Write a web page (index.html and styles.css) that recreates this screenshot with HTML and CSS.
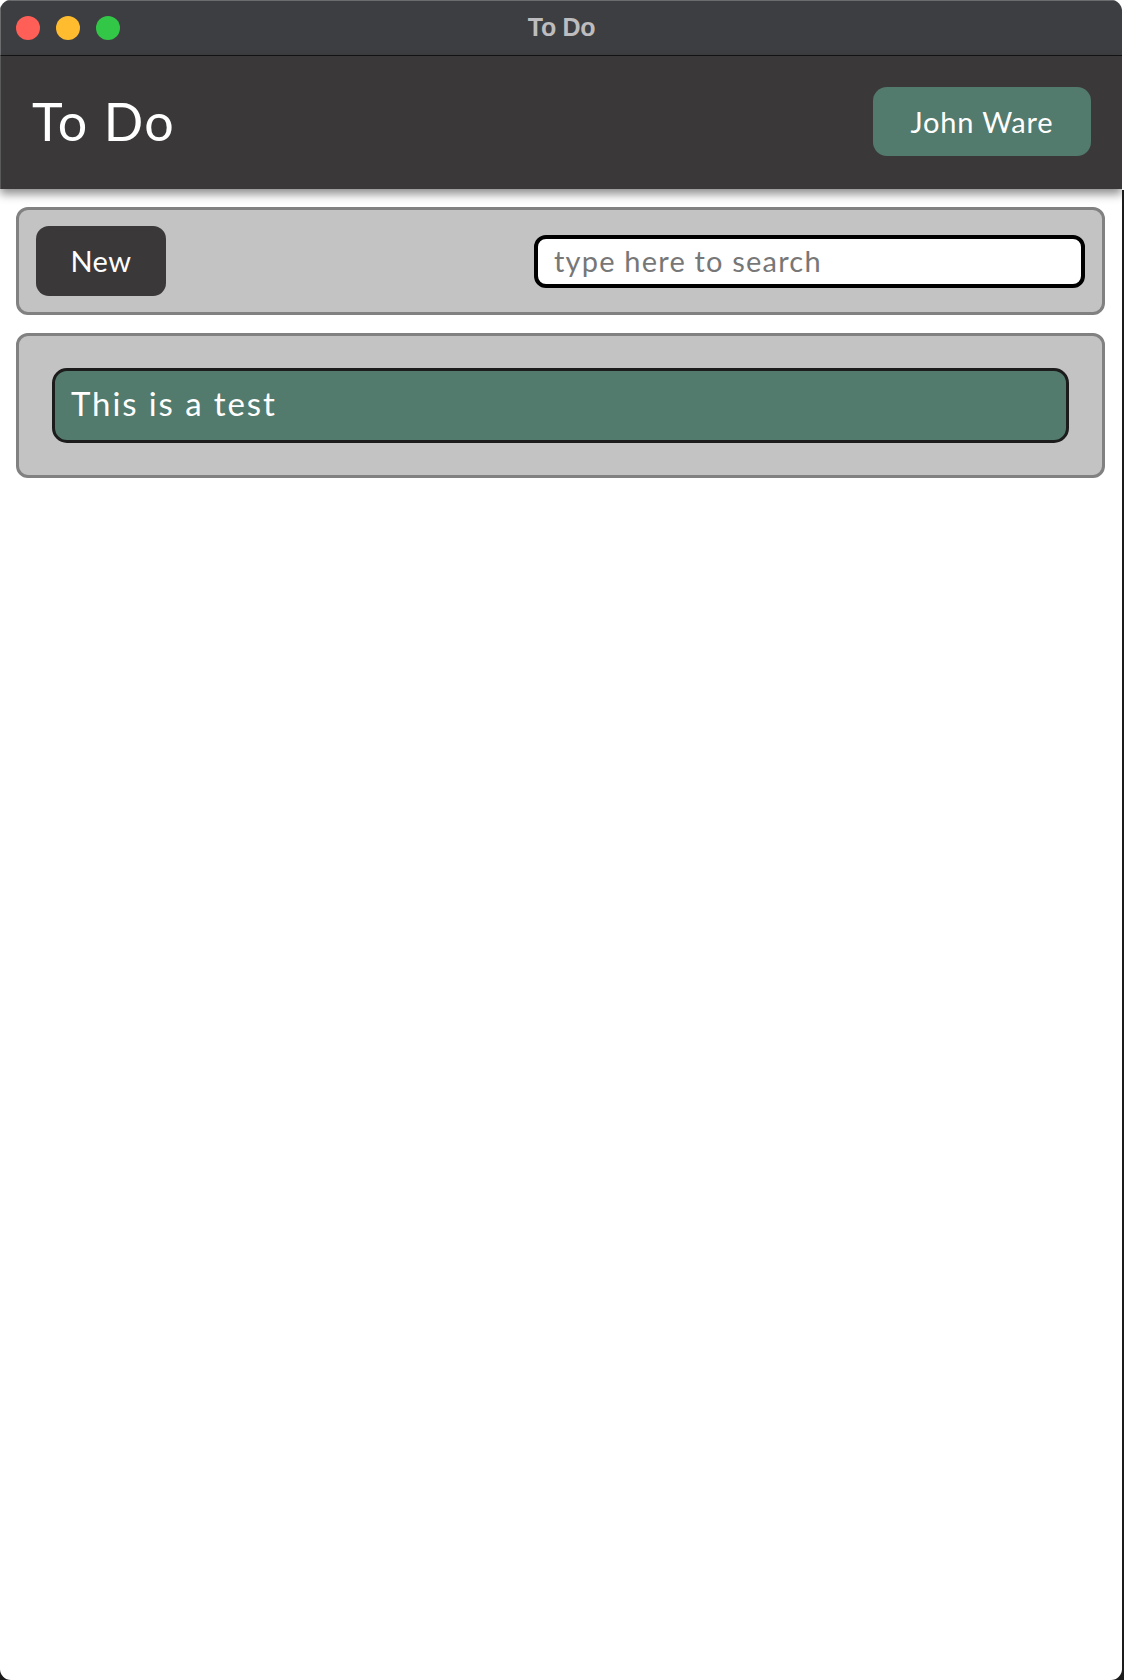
FILE: index.html
```html
<!DOCTYPE html>
<html lang="en">
<head>
<meta charset="utf-8">
<title>To Do</title>
<link rel="stylesheet" href="styles.css">
</head>
<body>
<div class="window">
  <div class="titlebar">
    <div class="lights">
      <span class="light red"></span>
      <span class="light yellow"></span>
      <span class="light green"></span>
    </div>
    <div class="wintitle">To Do</div>
    <div></div>
  </div>
  <header class="appbar">
    <h1 class="brand">To Do</h1>
    <button class="user">John Ware</button>
  </header>
  <main class="main">
    <section class="panel toolbar">
      <button class="newbtn">New</button>
      <input class="search" type="text" placeholder="type here to search">
    </section>
    <section class="panel list">
      <div class="item">This is a test</div>
    </section>
  </main>
</div>
</body>
</html>
```

FILE: styles.css
```css
html, body {
  margin: 0;
  padding: 0;
}
body {
  width: 1124px;
  height: 1680px;
  background: linear-gradient(to bottom, #ffffff 0, #ffffff 190px, #1b1b1b 190px, #1b1b1b 100%);
  font-family: "Lato", "Noto Sans", sans-serif;
  overflow: hidden;
}
.window {
  width: 1122px;
  height: 1680px;
  background: #ffffff;
  border-radius: 11px;
  overflow: hidden;
  box-sizing: border-box;
  display: flex;
  flex-direction: column;
}
.titlebar {
  height: 56px;
  flex: none;
  background: #3d3e41;
  border-bottom: 1px solid #141414;
  border-top: 1px solid #6b6c6e;
  border-left: 1px solid #6b6c6e;
  box-sizing: border-box;
  display: grid;
  grid-template-columns: 1fr auto 1fr;
  align-items: center;
}
.lights {
  display: flex;
  gap: 16px;
  padding-left: 15px;
}
.light {
  width: 24px;
  height: 24px;
  border-radius: 50%;
  display: block;
}
.red { background: #ff5f57; }
.yellow { background: #febc2e; }
.green { background: #33c748; }
.wintitle {
  font-family: "Liberation Sans", Arial, sans-serif;
  font-weight: bold;
  font-size: 25px;
  color: #bdbdbf;
  letter-spacing: -0.3px;
  margin-top: -2px;
}
.appbar {
  height: 133px;
  flex: none;
  background: #3a3839;
  border-left: 1px solid #5a5a5a;
  display: flex;
  align-items: center;
  justify-content: space-between;
  padding: 0 31px 0 31px;
  box-shadow: 0 5px 9px rgba(0, 0, 0, 0.45);
  position: relative;
  z-index: 1;
}
.brand {
  margin: 0;
  font-weight: 400;
  font-size: 52px;
  color: #ffffff;
  letter-spacing: 1.5px;
  line-height: 1;
  margin-top: -4px;
}
.user {
  width: 218px;
  height: 69px;
  border: none;
  border-radius: 14px;
  background: #527a6d;
  color: #ffffff;
  font-family: inherit;
  font-size: 29px;
  letter-spacing: 0.8px;
  margin-top: -2px;
}
.main {
  display: flex;
  flex-direction: column;
  gap: 18px;
  padding: 18px 17px 0 16px;
}
.panel {
  background: #c3c3c3;
  border: 3px solid #818181;
  border-radius: 12px;
}
.toolbar {
  height: 108px;
  box-sizing: border-box;
  display: flex;
  align-items: center;
  justify-content: space-between;
  padding: 0 17px 0 17px;
}
.newbtn {
  width: 130px;
  height: 70px;
  border: none;
  border-radius: 13px;
  background: #3a3839;
  color: #ffffff;
  font-family: inherit;
  font-size: 29px;
  letter-spacing: 0.5px;
  padding-bottom: 3px;
}
.search {
  width: 551px;
  height: 53px;
  box-sizing: border-box;
  border: 4px solid #000000;
  border-radius: 12px;
  background: #ffffff;
  padding: 0 0 2px 16px;
  font-family: inherit;
  font-size: 29px;
  letter-spacing: 1.2px;
  outline: none;
}
.search::placeholder {
  color: #777777;
}
.list {
  padding: 32px 33px;
}
.item {
  height: 75px;
  box-sizing: border-box;
  border: 3px solid #1c1c1c;
  border-radius: 15px;
  background: #527a6d;
  color: #ffffff;
  font-size: 33px;
  letter-spacing: 1.9px;
  display: flex;
  align-items: center;
  padding-left: 16px;
  padding-bottom: 6px;
}
```
